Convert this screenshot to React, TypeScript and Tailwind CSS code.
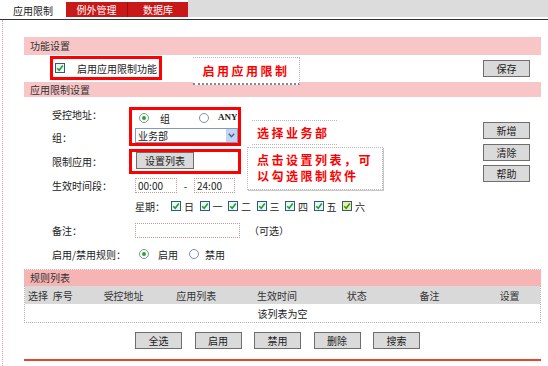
import React from 'react';

const font = "font-['Noto_Sans_CJK_SC','Liberation_Sans',sans-serif]";

function Check({ yellow = false }: { yellow?: boolean }) {
  return (
    <span
      className={`inline-flex items-center justify-center w-[10px] h-[10px] border border-[#2b5a8c] ${
        yellow ? 'bg-[#fbe9a0]' : 'bg-[#eef4fb]'
      }`}
    >
      <svg width="8" height="8" viewBox="0 0 8 8">
        <path d="M1.2 4.2 L3.2 6.2 L6.8 1.6" fill="none" stroke="#1fa21f" strokeWidth="1.6" />
      </svg>
    </span>
  );
}

function Radio({ on = false }: { on?: boolean }) {
  return (
    <span className="inline-flex items-center justify-center w-[10px] h-[10px] rounded-full border border-[#7c90a8] bg-white">
      {on && <span className="w-[4px] h-[4px] rounded-full bg-[#2aa52a]" />}
    </span>
  );
}

function Btn({ children, className = '' }: { children: React.ReactNode; className?: string }) {
  return (
    <button
      className={`flex items-center justify-center h-[17px] w-[47px] border border-[#6e6e6e] bg-[#dadada] text-[10px] text-[#222] leading-none ${className}`}
    >
      {children}
    </button>
  );
}

function Callout({ className, children }: { className: string; children: React.ReactNode }) {
  return (
    <div
      className={`absolute bg-white border border-dotted border-[#b8b8b8] text-[#ff0000] font-bold text-[12px] tracking-[2.5px] leading-[16px] ${className}`}
    >
      {children}
    </div>
  );
}

export default function App() {
  const days = ['日', '一', '二', '三', '四', '五', '六'];
  const cols: [string, string][] = [
    ['选择', 'w-[26px]'],
    ['序号', 'w-[24px]'],
    ['受控地址', 'w-[98px]'],
    ['应用列表', 'w-[48px]'],
    ['生效时间', 'w-[114px]'],
    ['状态', 'w-[46px]'],
    ['备注', 'w-[100px]'],
    ['设置', 'w-[61px]'],
  ];

  return (
    <div className={`relative w-[548px] h-[366px] overflow-hidden bg-white text-[10px] text-[#222] ${font}`}>
      {/* tabs */}
      <div className="flex h-[20px] border-b border-[#333]">
        <div className="w-[66px] flex items-center justify-center text-[10px] text-[#222] pt-[1px]">应用限制</div>
        <div className="w-[62px] mt-[2px] h-[15px] bg-[#c81818] text-white flex items-center justify-center border-r border-[#9a1010]">
          例外管理
        </div>
        <div className="w-[60px] mt-[2px] h-[15px] bg-[#c81818] text-white flex items-center justify-center">数据库</div>
        <div className="flex-1 h-[17px] bg-[#dcdcdc]" />
      </div>

      <div className="flex">
        <div className="ml-[2px] w-[22px] h-[346px] border-l border-dotted border-[#f0a0a0]" />
        <div className="w-[517px]">
          {/* 功能设置 */}
          <div className="mt-[17px] h-[18px] bg-[#f8c6c6] pl-[6px] leading-[18px] text-[#333]">功能设置</div>
          <div className="flex items-start h-[27px]">
            <div className="ml-[26px] mt-[1px] h-[24px] w-[112px] border-[3px] border-[#ff0000] flex items-center pl-[2px] gap-[12px]">
              <Check />
              <span>启用应用限制功能</span>
            </div>
            <Btn className="ml-auto mr-[11px] mt-[5px]">保存</Btn>
          </div>

          {/* 应用限制设置 */}
          <div className="h-[15px] bg-[#f8c6c6] pl-[6px] leading-[15px] text-[#333]">应用限制设置</div>
          <div className="flex">
            <div className="flex-1">
              <div className="flex mt-[10px]">
                <div className="w-[105px] pl-[28px] pt-[1px] leading-[14px]">
                  <div>受控地址：</div>
                  <div className="mt-[9px]">组：</div>
                </div>
                <div className="w-[112px] h-[39px] border-[3px] border-[#ff0000]">
                  <div className="flex items-center h-[12px] mt-[2px] pl-[7px]">
                    <Radio on />
                    <span className="ml-[11px]">组</span>
                    <span className="ml-[29px]">
                      <Radio />
                    </span>
                    <span className="ml-[9px] font-['Liberation_Serif',serif] text-[9px] font-bold">ANY</span>
                  </div>
                  <div className="mt-[4px] ml-[3px] w-[103px] h-[15px] border border-[#7f9db9] bg-white flex items-center">
                    <span className="flex-1 pl-[2px] text-[10px] leading-none">业务部</span>
                    <span className="w-[11px] h-[13px] bg-[#c3d3f3] flex items-center justify-center">
                      <svg width="7" height="5" viewBox="0 0 7 5">
                        <path d="M0.8 0.8 L3.5 3.8 L6.2 0.8" fill="none" stroke="#4d6185" strokeWidth="1.4" />
                      </svg>
                    </span>
                  </div>
                </div>
              </div>

              <div className="flex mt-[3px] h-[25px]">
                <div className="w-[105px] pl-[28px] flex items-center">限制应用：</div>
                <div className="w-[112px] h-[25px] border-[3px] border-[#ff0000]">
                  <button className="ml-[4px] h-[17px] w-[58px] border border-[#6e6e6e] bg-[#dadada] text-[10px] leading-none">
                    设置列表
                  </button>
                </div>
              </div>

              <div className="flex items-center mt-[3px] h-[16px]">
                <div className="w-[111px] pl-[28px]">生效时间段：</div>
                <div className="w-[42px] h-[15px] border border-dotted border-[#c49a8e] flex items-center pl-[2px] text-[10px]">
                  00:00
                </div>
                <span className="w-[17px] text-center">-</span>
                <div className="w-[41px] h-[15px] border border-dotted border-[#c49a8e] flex items-center pl-[2px] text-[10px]">
                  24:00
                </div>
              </div>

              <div className="flex items-center mt-[6px] h-[14px] pl-[111px]">
                <span className="w-[36px]">星期：</span>
                {days.map((d, i) => (
                  <span key={d} className="w-[28.5px] flex items-center gap-[3px]">
                    <Check yellow={i === 6} />
                    <span>{d}</span>
                  </span>
                ))}
              </div>

              <div className="flex items-center mt-[9px] h-[16px]">
                <div className="w-[111px] pl-[28px]">备注：</div>
                <div className="w-[105px] h-[15px] border border-dotted border-[#c49a8e]" />
                <span className="ml-[9px]">（可选）</span>
              </div>

              <div className="flex items-center mt-[9px] h-[14px]">
                <div className="w-[115px] pl-[28px]">启用/禁用规则：</div>
                <Radio on />
                <span className="ml-[9px]">启用</span>
                <span className="ml-[11px]">
                  <Radio />
                </span>
                <span className="ml-[6px]">禁用</span>
              </div>
            </div>

            <div className="w-[47px] mr-[11px] pt-[25px] flex flex-col">
              <Btn>新增</Btn>
              <Btn className="mt-[5px]">清除</Btn>
              <Btn className="mt-[4px]">帮助</Btn>
            </div>
          </div>

          {/* 规则列表 */}
          <div className="mt-[8px] border-t border-dotted border-[#f0a0a0]" />
          <div className="h-[16px] bg-[#f6b4b4] pl-[6px] leading-[16px] text-[#333]">规则列表</div>
          <div className="border-b border-l border-r border-dotted border-[#b0b0b0]">
            <div className="flex h-[18px] bg-[#d9d9d9] items-center text-[#333]">
              {cols.map(([t, w]) => (
                <span key={t} className={`${w} text-center`}>
                  {t}
                </span>
              ))}
            </div>
            <div className="h-[18px] flex items-center justify-center">该列表为空</div>
          </div>

          <div className="flex gap-[12.5px] pl-[111px] mt-[9px]">
            <Btn>全选</Btn>
            <Btn>启用</Btn>
            <Btn>禁用</Btn>
            <Btn>删除</Btn>
            <Btn>搜索</Btn>
          </div>
          <div className="mt-[10px] h-[2px] bg-[#e4462a]" />
        </div>
      </div>

      {/* callouts */}
      <Callout className="left-[193px] top-[57px] w-[107px] h-[28px] border-l-0 border-b-2 border-b-solid border-b-[#7a8796] flex items-center justify-center">
        启用应用限制
      </Callout>
      <Callout className="left-[252px] top-[120px] w-[85px] h-[25px] border-l-0 border-r-0 flex items-center pl-[5px]">
        选择业务部
      </Callout>
      <Callout className="left-[247px] top-[147px] w-[136px] h-[43px] pl-[9px] pt-[4px] shadow-[1px_1px_0_#c8c8c8]">
        <div>点击设置列表，可</div>
        <div>以勾选限制软件</div>
      </Callout>
    </div>
  );
}
